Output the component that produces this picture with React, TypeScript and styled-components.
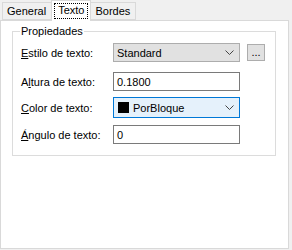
import React from 'react';
import styled, { createGlobalStyle } from 'styled-components';

const GlobalStyle = createGlobalStyle`
  html, body {
    margin: 0;
    padding: 0;
    background: #f0f0f0;
  }
  body {
    font-family: "Liberation Sans", Arial, sans-serif;
    font-size: 11px;
    color: #000;
  }
`;

const Window = styled.div`
  width: 292px;
  height: 250px;
  background: #f0f0f0;
  overflow: hidden;
`;

const TabStrip = styled.div`
  display: flex;
  align-items: flex-end;
  height: 20px;
  padding-left: 2px;
  position: relative;
  z-index: 1;
`;

const Tab = styled.div<{ $active?: boolean }>`
  box-sizing: border-box;
  height: ${({ $active }) => ($active ? '21px' : '18px')};
  margin-bottom: ${({ $active }) => ($active ? '-1px' : '0')};
  margin-left: ${({ $active }) => ($active ? '-1px' : '0')};
  margin-right: ${({ $active }) => ($active ? '-1px' : '0')};
  padding: ${({ $active }) => ($active ? '2px 2px 0' : '2px 5px 0 4px')};
  border: 1px solid #d9d9d9;
  border-bottom: ${({ $active }) => ($active ? 'none' : '1px solid #d9d9d9')};
  background: ${({ $active }) => ($active ? '#fff' : '#f0f0f0')};
  line-height: 13px;
  white-space: nowrap;
`;

const FocusRect = styled.span`
  display: block;
  padding: 0 3px 1px 3px;
  border: 1px dotted #000;
`;

const Panel = styled.div`
  box-sizing: border-box;
  width: 289px;
  height: 229px;
  background: #fff;
  border: 1px solid #d9d9d9;
  padding: 4px 0 0 11px;
`;

const Group = styled.fieldset`
  box-sizing: border-box;
  width: 264px;
  margin: 0;
  padding: 0 0 11px 8px;
  border: 1px solid #dcdcdc;
`;

const Legend = styled.legend`
  padding: 0 1px;
  margin-left: -1px;
  line-height: 13px;
`;

const Row = styled.div<{ $mt: number }>`
  display: flex;
  align-items: center;
  margin-top: ${({ $mt }) => $mt}px;
`;

const Label = styled.span`
  width: 92px;
  flex: none;
  white-space: nowrap;
`;

const Key = styled.span`
  text-decoration: underline;
  text-underline-offset: 1px;
`;

const Combo = styled.div<{ $focused?: boolean }>`
  box-sizing: border-box;
  width: 127px;
  height: ${({ $focused }) => ($focused ? '21px' : '19px')};
  display: flex;
  align-items: center;
  padding: 0 5px 0 3px;
  border: 1px solid ${({ $focused }) => ($focused ? '#0078d7' : '#adadad')};
  background: ${({ $focused }) => ($focused ? '#e5f1fb' : '#e1e1e1')};
`;

const ComboText = styled.span`
  flex: 1;
  display: flex;
  align-items: center;
  gap: 4px;
`;

const Swatch = styled.span`
  width: 11px;
  height: 11px;
  background: #000;
  margin-left: 1px;
`;

const TextBox = styled.div`
  box-sizing: border-box;
  width: 127px;
  height: 19px;
  display: flex;
  align-items: center;
  padding: 0 3px;
  border: 1px solid #7a7a7a;
  background: #fff;
`;

const SmallButton = styled.div`
  box-sizing: border-box;
  width: 18px;
  height: 17px;
  margin-left: 7px;
  border: 1px solid #adadad;
  background: #e1e1e1;
  display: flex;
  align-items: flex-end;
  justify-content: center;
  line-height: 12px;
  padding-bottom: 2px;
`;

const Chevron = () => (
  <svg width="9" height="5" viewBox="0 0 9 5">
    <path d="M0.5 0.5 L4.5 4.5 L8.5 0.5" fill="none" stroke="#444" strokeWidth="1" />
  </svg>
);

export default function App() {
  return (
    <Window>
      <GlobalStyle />
      <TabStrip>
        <Tab>General</Tab>
        <Tab $active>
          <FocusRect>Texto</FocusRect>
        </Tab>
        <Tab>Bordes</Tab>
      </TabStrip>
      <Panel>
        <Group>
          <Legend>Propiedades</Legend>
          <Row $mt={5}>
            <Label>
              <Key>E</Key>stilo de texto:
            </Label>
            <Combo>
              <ComboText>Standard</ComboText>
              <Chevron />
            </Combo>
            <SmallButton>...</SmallButton>
          </Row>
          <Row $mt={10}>
            <Label>
              A<Key>l</Key>tura de texto:
            </Label>
            <TextBox>0.1800</TextBox>
          </Row>
          <Row $mt={6}>
            <Label>
              <Key>C</Key>olor de texto:
            </Label>
            <Combo $focused>
              <ComboText>
                <Swatch />
                PorBloque
              </ComboText>
              <Chevron />
            </Combo>
          </Row>
          <Row $mt={7}>
            <Label>
              <Key>Á</Key>ngulo de texto:
            </Label>
            <TextBox>0</TextBox>
          </Row>
        </Group>
      </Panel>
    </Window>
  );
}
